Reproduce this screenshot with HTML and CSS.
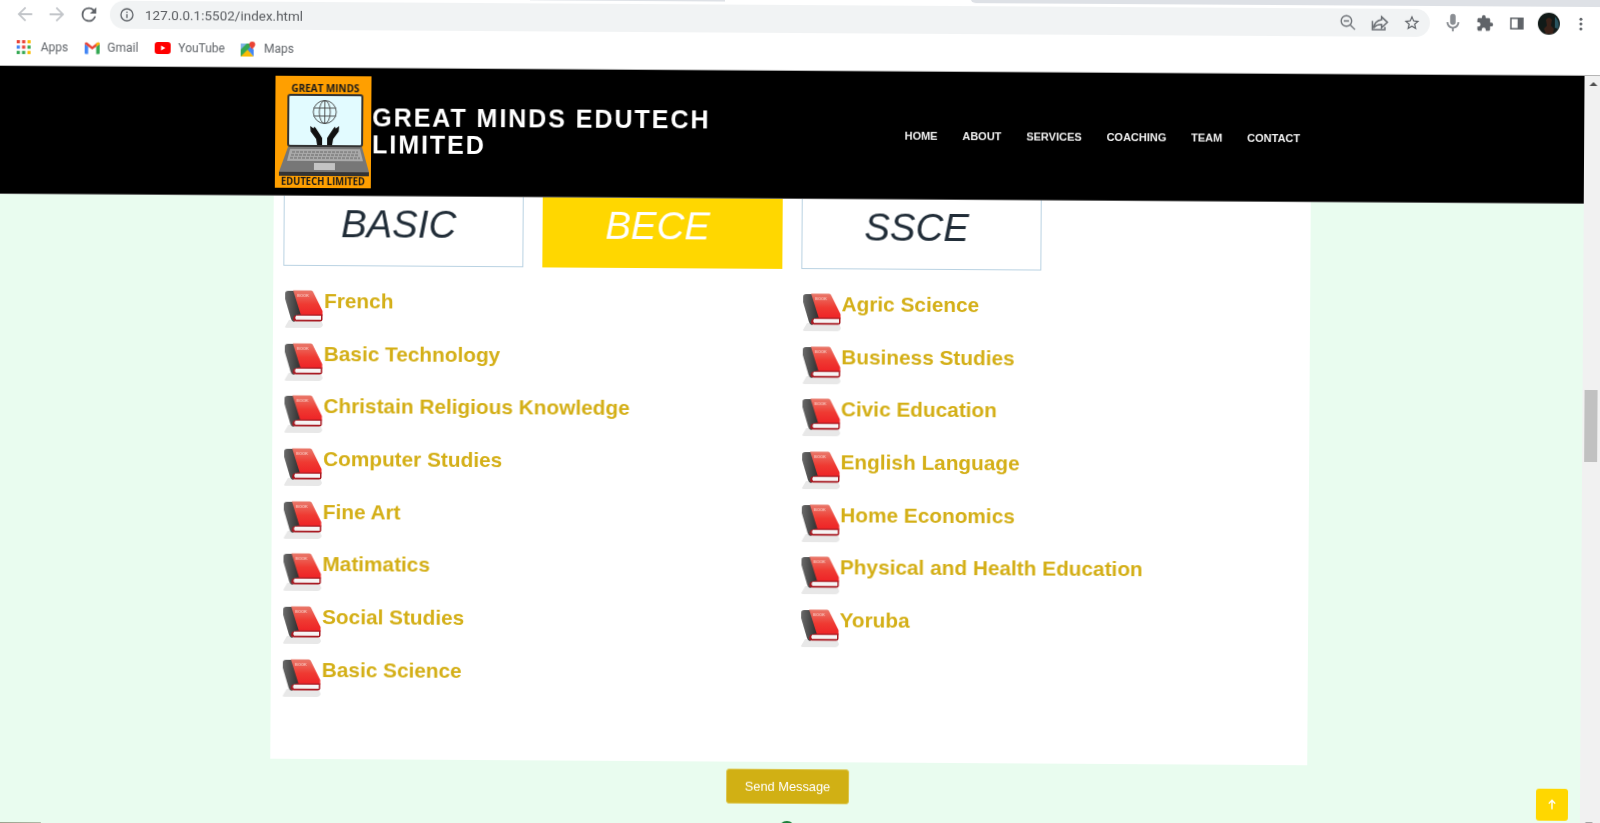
FILE: index.html
```html
<!DOCTYPE html>
<html lang="en">
<head>
<meta charset="UTF-8">
<meta name="viewport" content="width=device-width, initial-scale=1.0">
<title>Great Minds Edutech Limited</title>
<link rel="stylesheet" href="styles.css">
</head>
<body>

<svg class="defs" width="0" height="0" aria-hidden="true">
    <defs>
        <linearGradient id="coverRed" x1="0" y1="0" x2="0" y2="1">
            <stop offset="0" stop-color="#e9796b"/>
            <stop offset="0.55" stop-color="#ef3a32"/>
            <stop offset="1" stop-color="#ee2226"/>
        </linearGradient>
        <linearGradient id="spineDark" x1="0" y1="0" x2="1" y2="0">
            <stop offset="0" stop-color="#6a6a6a"/>
            <stop offset="1" stop-color="#2b2b2b"/>
        </linearGradient>
        <symbol id="book" viewBox="0 0 40 40">
            <path d="M1 38 L5 31 H37 L39 36 Q38 39 35 39 H3 Q1 39 1 38z" fill="#e8e8e8"/>
            <path d="M1 4.5 Q1 2 4 2 H10 L18 26 L10 33 Q8 33 7 30 L1 10z" fill="url(#spineDark)"/>
            <path d="M9 1.500 H27 Q28.500 1.500 29 3 L38.500 22 V26.500 H17 z" fill="url(#coverRed)"/>
            <path d="M10 27 L15 25.500 H38.500 V30.500 Q38.500 32.500 36 32.500 H12 Q9 32.500 9 30z" fill="#a81a22"/>
            <path d="M12 26.800 H37 V30.800 H12 Q10.600 28.800 12 26.800z" fill="#f6f4f4"/>
            <text x="19" y="7.800" class="book-word">BOOK</text>
        </symbol>
    </defs>
</svg>

<div class="browser">

    <div class="tabstrip">
        <div class="tab-white tab-first"></div>
        <div class="tab-gray tab-short"></div>
        <div class="tab-white tab-current"></div>
        <div class="tab-gray tab-rest"></div>
    </div>

    <div class="toolbar">
        <span class="tool-btn">
            <svg viewBox="0 0 24 24" class="ico ico-nav ico-off"><path d="M20 11H7.800l5.600-5.600L12 4l-8 8 8 8 1.400-1.400L7.800 13H20z"/></svg>
        </span>
        <span class="tool-btn">
            <svg viewBox="0 0 24 24" class="ico ico-nav ico-off"><path d="M4 11h12.200l-5.600-5.600L12 4l8 8-8 8-1.400-1.400 5.600-5.600H4z"/></svg>
        </span>
        <span class="tool-btn">
            <svg viewBox="0 0 24 24" class="ico ico-nav ico-dark"><path d="M17.650 6.350A7.960 7.960 0 0 0 12 4a8 8 0 1 0 7.750 10h-2.080A6 6 0 1 1 12 6c1.660 0 3.140.69 4.220 1.780L13 11h7V4z"/></svg>
        </span>

        <div class="omnibox">
            <span class="info-btn">
                <svg viewBox="0 0 24 24" class="ico ico-dark"><path d="M11 7h2v2h-2zm0 4h2v6h-2zm1-9a10 10 0 1 0 0 20 10 10 0 0 0 0-20zm0 18a8 8 0 1 1 0-16 8 8 0 0 1 0 16z"/></svg>
            </span>
            <span class="url">127.0.0.1:5502/index.html</span>
            <div class="omni-actions">
                <span class="tool-btn">
                    <svg viewBox="0 0 24 24" class="ico ico-line"><circle cx="10" cy="10" r="7"/><path d="M15.200 15.200L21.500 21.500M6.500 10h7"/></svg>
                </span>
                <span class="tool-btn">
                    <svg viewBox="0 0 24 24" class="ico ico-wide ico-line"><path d="M14 5l7 6.500-7 6.500v-4c-4.500 0-7.500 1.500-9.500 4.500.5-5 3.500-9 9.500-10zM3 10v10.500h15V17"/></svg>
                </span>
                <span class="tool-btn">
                    <svg viewBox="0 0 24 24" class="ico ico-dark"><path d="M22 9.240l-7.190-.62L12 2 9.190 8.630 2 9.240l5.460 4.730L5.820 21 12 17.270 18.180 21l-1.630-7.030L22 9.240zM12 15.400l-3.760 2.270 1-4.280-3.320-2.880 4.380-.38L12 6.100l1.710 4.040 4.380.38-3.320 2.880 1 4.280L12 15.400z"/></svg>
                </span>
            </div>
        </div>

        <div class="tool-right">
            <span class="tool-btn">
                <svg viewBox="0 0 24 24" class="ico ico-mic"><path d="M12 14a3 3 0 0 0 3-3V5a3 3 0 0 0-6 0v6a3 3 0 0 0 3 3zM17 11a5 5 0 0 1-10 0H5a7 7 0 0 0 6 6.900V21h2v-3.100A7 7 0 0 0 19 11z"/></svg>
            </span>
            <span class="tool-btn">
                <svg viewBox="0 0 24 24" class="ico ico-dark"><path d="M20.500 11H19V7c0-1.100-.9-2-2-2h-4V3.500a2.500 2.500 0 0 0-5 0V5H4c-1.100 0-2 .9-2 2v3.800h1.500a2.700 2.700 0 0 1 0 5.400H2V20c0 1.100.9 2 2 2h3.800v-1.500a2.700 2.700 0 0 1 5.400 0V22H17c1.100 0 2-.9 2-2v-4h1.500a2.500 2.500 0 0 0 0-5z"/></svg>
            </span>
            <span class="tool-btn">
                <svg viewBox="0 0 24 24" class="ico ico-dark"><path d="M3 4h18v16H3zm2 2v12h8V6z"/></svg>
            </span>
            <span class="tool-btn">
                <svg viewBox="0 0 22 22" class="avatar">
                    <circle cx="11" cy="11" r="11" fill="#111a18"/>
                    <path d="M17 4a11 11 0 0 1 3 12l-3-1z" fill="#2a5560"/>
                    <path d="M8 7q3-4 6 0l-1 6 3 3-1 5H8l-2-5 3-3z" fill="#3a2118"/>
                </svg>
            </span>
            <span class="tool-btn">
                <svg viewBox="0 0 24 24" class="ico ico-dark"><circle cx="12" cy="5.500" r="2"/><circle cx="12" cy="12" r="2"/><circle cx="12" cy="18.500" r="2"/></svg>
            </span>
        </div>
    </div>

    <div class="bookmarks">
        <a class="mark mark-apps">
            <svg viewBox="0 0 14 14" class="mark-ico">
                <rect x="0" y="0" width="3" height="3" fill="#ea4335"/><rect x="5" y="0" width="3" height="3" fill="#ea4335"/><rect x="10" y="0" width="3" height="3" fill="#fbbc04"/>
                <rect x="0" y="5" width="3" height="3" fill="#4285f4"/><rect x="5" y="5" width="3" height="3" fill="#ea4335"/><rect x="10" y="5" width="3" height="3" fill="#34a853"/>
                <rect x="0" y="10" width="3" height="3" fill="#34a853"/><rect x="5" y="10" width="3" height="3" fill="#34a853"/><rect x="10" y="10" width="3" height="3" fill="#fbbc04"/>
            </svg>
            Apps
        </a>
        <a class="mark">
            <svg viewBox="0 0 15 14" class="mark-ico">
                <path d="M0 3v9q0 1 1 1h2.500V5.500z" fill="#4285f4"/>
                <path d="M15 3v9q0 1-1 1h-2.500V5.500z" fill="#34a853"/>
                <path d="M0 3q0-2.500 2.500-1.500L7.500 5.500 12.500 1.500Q15 .5 15 3l-3.500 2.500-4 3-4-3z" fill="#ea4335"/>
                <path d="M12.500 1.500Q15 .5 15 3l-3.500 2.500V2.300z" fill="#fbbc04"/>
            </svg>
            Gmail
        </a>
        <a class="mark">
            <svg viewBox="0 0 16 12" class="mark-ico mark-yt">
                <rect x="0" y="0" width="16" height="12" rx="3" fill="#f00"/>
                <path d="M6.400 3.500v5l4.200-2.500z" fill="#fff"/>
            </svg>
            YouTube
        </a>
        <a class="mark">
            <svg viewBox="0 0 15 15" class="mark-ico">
                <path d="M0 2h9v13H0z" fill="#34a853"/>
                <path d="M0 15l7-7 6 7z" fill="#fbbc04"/>
                <path d="M7 8l3-3 3 3v7z" fill="#4285f4"/>
                <path d="M0 2h6L0 8z" fill="#7fb4e8"/>
                <path d="M11.500 0a3 3 0 0 0-3 3c0 2 3 4.500 3 4.500s3-2.500 3-4.500a3 3 0 0 0-3-3z" fill="#ea4335"/>
            </svg>
            Maps
        </a>
    </div>

    <div class="page-row">
        <div class="page">

            <header class="site-header">
                <svg viewBox="0 0 96 112" class="logo">
                    <rect width="96" height="112" fill="#ff9f00"/>
                    <text x="50" y="16" class="logo-text" textLength="68" lengthAdjust="spacingAndGlyphs">GREAT MINDS</text>
                    <rect x="13" y="19" width="74" height="51" rx="2" fill="#e2fbff" stroke="#333" stroke-width="2"/>
                    <g fill="none" stroke="#444" stroke-width="0.9">
                        <circle cx="49.500" cy="36" r="11.500"/>
                        <ellipse cx="49.500" cy="36" rx="5.500" ry="11.500"/>
                        <path d="M49.500 24.500v23M38.500 32h22M38.500 40h22"/>
                    </g>
                    <path d="M35 50l3.500 2.500.5-2 1.500 1.500 4 6 2.500 4v7h-5l-1-6-5.500-7.500z" fill="#111"/>
                    <path d="M64 50l-3.500 2.500-.5-2-1.500 1.500-4 6-2.500 4v7h5l1-6 5.500-7.500z" fill="#111"/>
                    <path d="M13 71h74l7 25H4z" fill="#777"/>
                    <path d="M15 73h70l3 12H12z" fill="#aaa"/>
                    <path d="M17 76h66M16 79h68M15 82h70" stroke="#666" stroke-width="1" stroke-dasharray="3 1"/>
                    <rect x="39" y="87" width="21" height="7" fill="#c4c4c4"/>
                    <rect x="4" y="96" width="90" height="4" fill="#333"/>
                    <text x="48" y="109" class="logo-text" textLength="84" lengthAdjust="spacingAndGlyphs">EDUTECH LIMITED</text>
                </svg>
                <h1 class="brand">GREAT MINDS EDUTECH LIMITED</h1>
                <nav class="nav">
                    <a>HOME</a>
                    <a>ABOUT</a>
                    <a>SERVICES</a>
                    <a>COACHING</a>
                    <a>TEAM</a>
                    <a>CONTACT</a>
                </nav>
            </header>

            <section class="panel">
                <div class="tabs">
                    <div class="tab">BASIC</div>
                    <div class="tab tab-active">BECE</div>
                    <div class="tab">SSCE</div>
                </div>
                <div class="columns">
                    <ul class="subjects">
                        <li><svg class="book"><use href="#book"/></svg>French</li>
                        <li><svg class="book"><use href="#book"/></svg>Basic Technology</li>
                        <li><svg class="book"><use href="#book"/></svg>Christain Religious Knowledge</li>
                        <li><svg class="book"><use href="#book"/></svg>Computer Studies</li>
                        <li><svg class="book"><use href="#book"/></svg>Fine Art</li>
                        <li><svg class="book"><use href="#book"/></svg>Matimatics</li>
                        <li><svg class="book"><use href="#book"/></svg>Social Studies</li>
                        <li><svg class="book"><use href="#book"/></svg>Basic Science</li>
                    </ul>
                    <ul class="subjects">
                        <li><svg class="book"><use href="#book"/></svg>Agric Science</li>
                        <li><svg class="book"><use href="#book"/></svg>Business Studies</li>
                        <li><svg class="book"><use href="#book"/></svg>Civic Education</li>
                        <li><svg class="book"><use href="#book"/></svg>English Language</li>
                        <li><svg class="book"><use href="#book"/></svg>Home Economics</li>
                        <li><svg class="book"><use href="#book"/></svg>Physical and Health Education</li>
                        <li><svg class="book"><use href="#book"/></svg>Yoruba</li>
                    </ul>
                </div>
            </section>

            <div class="send-row">
                <button class="send-btn" type="button">Send Message</button>
            </div>

            <div class="page-foot">
                <span class="foot-strip"></span>
                <span class="foot-dot"></span>
            </div>

            <a class="to-top">
                <svg viewBox="0 0 12 12" class="to-top-ico"><path d="M6 1.500v9M2.800 4.700L6 1.500l3.200 3.200"/></svg>
            </a>
        </div>

        <div class="scrollbar">
            <span class="arrow-up"></span>
            <span class="thumb"></span>
            <span class="arrow-down"></span>
        </div>
    </div>
</div>

</body>
</html>
```

FILE: styles.css
```css
html,
body {
    margin: 0;
    padding: 0;
    width: 1600px;
    height: 823px;
    overflow: hidden;
    background-color: #fff;
}

.defs {
    display: block;
    height: 0;
}

/* the whole capture sits very slightly tilted and a little soft */
.browser {
    width: 1610px;
    height: 843px;
    margin-top: -20px;
    display: flex;
    flex-direction: column;
    transform: rotate(0.36deg);
    transform-origin: 0 20px;
    filter: blur(0.3px);
    font-family: 'Liberation Sans', Arial, sans-serif;
}

.tabstrip {
    height: 17px;
    flex: none;
    display: flex;
}

.tab-white {
    background-color: #fff;
}

.tab-gray {
    background-color: #dee1e6;
}

.tab-first {
    width: 530px;
}

.tab-short {
    width: 195px;
}

.tab-current {
    width: 245px;
}

.tab-rest {
    flex: 1;
    border-bottom-left-radius: 6px;
}

.toolbar {
    height: 34px;
    flex: none;
    display: flex;
    align-items: center;
    padding-left: 9px;
    background-color: #fff;
}

.tool-btn {
    width: 32px;
    height: 28px;
    flex: none;
    display: flex;
    align-items: center;
    justify-content: center;
}

.ico {
    width: 18px;
    height: 18px;
}

.ico-nav {
    width: 22px;
    height: 22px;
}

.ico-wide {
    width: 20px;
    height: 20px;
}

.ico-off {
    fill: #c2c5c9;
}

.ico-dark {
    fill: #5f6368;
}

.ico-mic {
    width: 22px;
    height: 22px;
    fill: #8a8e93;
}

.ico-line {
    fill: none;
    stroke: #6b6f74;
    stroke-width: 1.8;
}

.avatar {
    width: 22px;
    height: 22px;
}

.omnibox {
    width: 1320px;
    height: 28px;
    margin-left: 5px;
    flex: none;
    display: flex;
    align-items: center;
    background-color: #f1f3f4;
    border-radius: 14px;
}

.info-btn {
    width: 16px;
    height: 16px;
    margin-left: 9px;
    display: flex;
}

.info-btn .ico {
    width: 16px;
    height: 16px;
}

.url {
    margin-left: 10px;
    font-family: Roboto, sans-serif;
    font-size: 13.5px;
    color: #5a5d61;
}

.omni-actions {
    margin-left: auto;
    padding-right: 2px;
    display: flex;
}

.tool-right {
    margin-left: 7px;
    display: flex;
}

.bookmarks {
    height: 32px;
    flex: none;
    padding: 0 0 2px 17px;
    display: flex;
    align-items: center;
    gap: 16px;
    background-color: #fff;
    border-bottom: 1px solid #b4b4b4;
}

.mark {
    display: flex;
    align-items: center;
    gap: 8px;
    font-family: Roboto, sans-serif;
    font-size: 12px;
    color: #5f6368;
}

.mark-apps {
    gap: 9px;
}

.mark-ico {
    width: 15px;
    height: 15px;
}

.mark-yt {
    width: 16px;
    height: 12px;
}

.page-row {
    flex: 1;
    display: flex;
    min-height: 0;
}

.page {
    position: relative;
    width: 1585px;
    flex: none;
    background-color: #e9fcef;
}

.site-header {
    height: 128px;
    box-sizing: border-box;
    padding-left: 276px;
    padding-right: 284px;
    display: flex;
    align-items: center;
    background-color: #000;
    border-bottom: 1px solid #555;
}

.logo {
    width: 96px;
    height: 112px;
    flex: none;
}

.logo-text {
    font-family: 'Open Sans', sans-serif;
    font-weight: 700;
    font-size: 10px;
    text-anchor: middle;
    fill: #1a1a1a;
}

.brand {
    width: 348px;
    margin: 0 0 2px 1px;
    font-size: 25px;
    line-height: 27px;
    font-weight: 700;
    letter-spacing: 1.96px;
    color: #fff;
}

.nav {
    margin-left: auto;
    display: flex;
    gap: 24.8px;
}

.nav a {
    font-size: 11px;
    font-weight: 700;
    color: #f0f0f0;
}

.panel {
    width: 1037px;
    height: 563px;
    margin-left: 275px;
    background-color: #fff;
}

.tabs {
    display: flex;
    gap: 19px;
    padding-left: 10px;
}

.tab {
    width: 240px;
    height: 70px;
    box-sizing: border-box;
    padding-right: 10px;
    border: 1px solid #b9d2e2;
    border-top: 0;
    text-align: center;
    font-size: 38.4px;
    font-style: italic;
    line-height: 55px;
    color: #212d38;
}

.tab-active {
    border-color: #ffd700;
    background-color: #ffd700;
    color: #fff;
}

.columns {
    display: flex;
    margin-top: 23px;
}

.subjects {
    width: 50%;
    box-sizing: border-box;
    margin: 0;
    padding: 0 0 0 11px;
    list-style: none;
}

.subjects + .subjects {
    margin-left: -1px;
}

.subjects li {
    height: 52.7px;
    display: flex;
    align-items: flex-start;
    font-size: 20.8px;
    font-weight: 700;
    line-height: 24px;
    color: #d4af17;
}

.book {
    width: 40px;
    height: 40px;
    flex: none;
}

.book-word {
    font-family: 'Liberation Sans', sans-serif;
    font-size: 4px;
    fill: #f7c0b8;
    text-anchor: middle;
}

.send-row {
    display: flex;
    justify-content: center;
    margin-top: 7px;
}

.send-btn {
    width: 123px;
    height: 35px;
    padding: 0;
    border: 1px solid #dcc64e;
    border-radius: 3px;
    background-color: #d1b014;
    font-family: 'Liberation Sans', sans-serif;
    font-size: 12.8px;
    color: #fff;
}

.page-foot {
    position: relative;
    height: 30px;
    margin-top: 23px;
}

.foot-strip {
    display: block;
    width: 46px;
    height: 3px;
    background-color: #9aa08c;
}

.foot-dot {
    position: absolute;
    left: 784px;
    top: -6px;
    width: 16px;
    height: 16px;
    border-radius: 50%;
    background-color: #1c7f3a;
}

.to-top {
    position: absolute;
    top: 713px;
    right: 12px;
    width: 32px;
    height: 32px;
    display: flex;
    align-items: center;
    justify-content: center;
    border-radius: 3px;
    background-color: #ffd700;
}

.to-top-ico {
    width: 12px;
    height: 12px;
    fill: none;
    stroke: #fff;
    stroke-width: 1.4;
}

.scrollbar {
    flex: 1;
    display: flex;
    flex-direction: column;
    background-color: #f1f1f1;
}

.arrow-up {
    width: 0;
    height: 0;
    margin: 6px 0 0 5px;
    border-left: 4px solid transparent;
    border-right: 4px solid transparent;
    border-bottom: 4px solid #505050;
}

.thumb {
    width: 13px;
    height: 72px;
    margin: 304px 0 0 2px;
    background-color: #c1c1c1;
}

.arrow-down {
    width: 0;
    height: 0;
    margin: 360px 0 0 5px;
    border-left: 4px solid transparent;
    border-right: 4px solid transparent;
    border-top: 4px solid #a3a3a3;
}
```
